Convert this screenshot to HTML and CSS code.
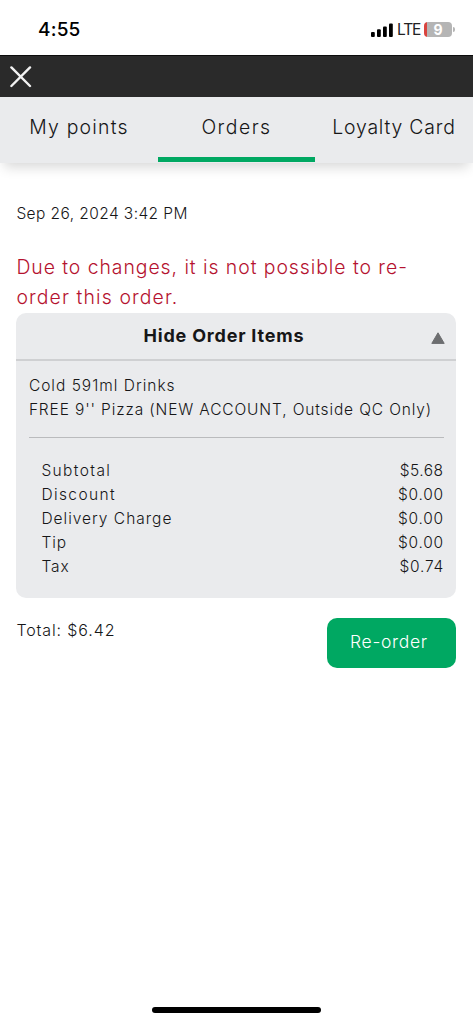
FILE: index.html
```html
<!DOCTYPE html>
<html lang="en">
<head>
<meta charset="utf-8">
<title>Orders</title>
<link rel="stylesheet" href="styles.css">
</head>
<body>
<div class="screen">
  <header class="status">
    <span class="clock">4:55</span>
    <div class="indicators">
      <svg class="signal" width="22" height="14" viewBox="0 0 22 14"><rect x="0" y="9" width="3.8" height="5" rx="1"/><rect x="6" y="6.3" width="3.8" height="7.7" rx="1"/><rect x="12" y="3.5" width="3.8" height="10.5" rx="1"/><rect x="18" y="0.5" width="3.8" height="13.5" rx="1"/></svg>
      <span class="network">LTE</span>
      <span class="battery">9</span><span class="battery-tip"></span>
    </div>
  </header>
  <div class="toolbar">
    <svg class="close" width="22" height="22" viewBox="0 0 22 22"><path d="M1.4 1.4 20 20M20 1.4 1.4 20"/></svg>
  </div>
  <nav class="tabs">
    <a class="tab"><span class="t-points">My points</span></a>
    <a class="tab active"><span class="t-orders">Orders</span></a>
    <a class="tab"><span class="t-card">Loyalty Card</span></a>
  </nav>
  <main class="order">
    <p class="date">Sep 26, 2024 3:42 PM</p>
    <p class="alert"><span class="a-one">Due to changes, it is not possible to re-</span><br><span class="a-two">order this order.</span></p>
    <section class="card">
      <div class="card-head">
        <span class="card-title">Hide Order Items</span>
        <svg class="arrow" width="14" height="12" viewBox="0 0 14 12"><path d="M7 .8 13.2 11.4H.8Z"/></svg>
      </div>
      <div class="card-body">
        <div class="items">
          <div class="i-one">Cold 591ml Drinks</div>
          <div class="i-two">FREE 9'' Pizza (NEW ACCOUNT, Outside QC Only)</div>
        </div>
        <div class="costs">
          <div class="row"><span class="wide">Subtotal</span><span class="price tight">$5.68</span></div>
          <div class="row"><span class="wide">Discount</span><span class="price">$0.00</span></div>
          <div class="row"><span>Delivery Charge</span><span class="price">$0.00</span></div>
          <div class="row"><span>Tip</span><span class="price">$0.00</span></div>
          <div class="row"><span>Tax</span><span class="price">$0.74</span></div>
        </div>
      </div>
    </section>
    <div class="footer">
      <span class="total">Total: $6.42</span>
      <button class="reorder">Re-order</button>
    </div>
  </main>
  <div class="home-bar"></div>
</div>
</body>
</html>
```
FILE: styles.css
```css
* { box-sizing: border-box; }
body { margin: 0; background: #fff; color: #161617; font-family: Inter, "Open Sans", sans-serif; font-weight: 300; }
.screen { height: 1024px; display: flex; flex-direction: column; overflow: hidden; }
.status { height: 55px; padding: 4px 18px 0 38px; display: flex; justify-content: space-between; align-items: center; }
.clock { font-size: 19px; font-weight: 500; letter-spacing: .2px; color: #000; }
.indicators { display: flex; align-items: center; }
.signal { margin-right: 4px; fill: #000; }
.network { width: 24px; margin-right: 3px; font-size: 15.5px; font-weight: 400; letter-spacing: -1.1px; color: #222; }
.battery { width: 28px; height: 15px; border-radius: 4px; background: linear-gradient(90deg, #d9443f 3px, #b5b5b5 3px); color: #fff; font-size: 14px; font-weight: 700; line-height: 15px; text-align: center; }
.battery-tip { width: 2px; height: 5px; margin-left: 1px; border-radius: 0 2px 2px 0; background: #b5b5b5; }
.toolbar { height: 42px; padding: 10px 10px 0; background: #2a2a2a; border-top: 1px solid #0c0c0c; }
.close { display: block; fill: none; stroke: #f2f2f2; stroke-width: 2.4; stroke-linecap: round; }
.tabs { height: 66px; flex: none; display: grid; grid-template-columns: 158px 157px 158px; background: #eaebed; box-shadow: 0 8px 12px -4px rgba(0,0,0,.16); }
.tab { padding-top: 15px; border-bottom: 5px solid transparent; text-align: center; font-size: 19.4px; line-height: 30px; white-space: nowrap; height: 65px; }
.t-points { letter-spacing: 1.2px; }
.t-orders { letter-spacing: 1.5px; }
.t-card { letter-spacing: .8px; }
.active { border-color: #00a862; }
.order { flex: 1; padding: 39px 16.6px 0 16.4px; }
p { margin: 0; }
.date { font-size: 15.5px; line-height: 24px; letter-spacing: .42px; }
.alert { margin-top: 26px; font-size: 19.4px; line-height: 30px; color: #b5122f; white-space: nowrap; }
.a-one { letter-spacing: .95px; }
.a-two { letter-spacing: 1.12px; }
.card { margin-top: 1px; height: 284.5px; border-radius: 10px; background: #eaebed; }
.card-head { position: relative; height: 48px; padding-top: 11px; border-bottom: 2px solid #cfd0d2; text-align: center; font-size: 18px; line-height: 24px; font-weight: 700; padding-right: 25px; }
.card-title { letter-spacing: .8px; }
.arrow { position: absolute; right: 11px; top: 19px; fill: #6d6e70; stroke: #6d6e70; stroke-linejoin: round; }
.card-body { padding: 13px 12.5px 0; font-size: 15.5px; line-height: 24px; white-space: nowrap; }
.items { padding-bottom: 15px; border-bottom: 1px solid #babbbd; }
.i-one { letter-spacing: 1px; }
.i-two { letter-spacing: .86px; }
.costs { padding: 21px 0 0 12.5px; }
.row { display: flex; justify-content: space-between; letter-spacing: 1px; }
.wide { letter-spacing: 1.4px; }
.price { letter-spacing: .75px; margin-right: 0; }
.tight { letter-spacing: .45px; margin-right: .5px; }
.footer { display: flex; justify-content: space-between; align-items: flex-start; padding-top: 20px; }
.total { font-size: 16px; line-height: 25px; letter-spacing: .88px; }
.reorder { width: 129px; height: 50px; padding: 0 6px 2px 0; border: 0; border-radius: 10px; background: #00a862; color: #fff; font: 300 17.5px Inter, "Open Sans", sans-serif; letter-spacing: .7px; }
.home-bar { width: 169px; height: 6px; margin: 0 auto 10.6px; border-radius: 3px; background: #000; }
```
